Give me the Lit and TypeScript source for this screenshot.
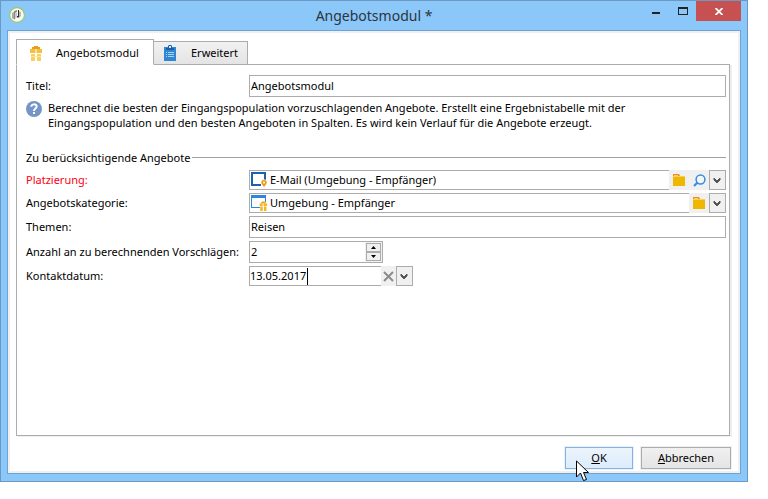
import { LitElement, html, css, svg } from "lit";
import { customElement, state } from "lit/decorators.js";

const giftShape = svg`
  <path d="M3 4V2h2V1h4v1h2v2z" fill="#ee9a20"/>
  <path d="M1 4h5v4H1zM8 4h5v4H8z" fill="#f5b818"/>
  <path d="M6 4h2v4H6z" fill="#fbe09a"/>
  <path d="M2 9h4v7H2zM8 9h4v7H8z" fill="#f5b818"/>`;

const giftIcon = html`<svg width="14" height="16" viewBox="0 0 14 16" aria-hidden="true">
  <path d="M3 4V2h2V1h4v1h2v2z" fill="#ee9a20"/>
  <path d="M1 4h5v4H1zM8 4h5v4H8z" fill="#f5c038"/>
  <path d="M6 4h2v4H6z" fill="#fbe09a"/>
  <path d="M2 9h4v7H2zM8 9h4v7H8z" fill="#f8d05c"/>
  <path d="M2 11h10v1H2z" fill="#fbe6b0"/>
</svg>`;

const clipboardIcon = html`<svg width="12" height="16" viewBox="0 0 12 16" aria-hidden="true">
  <path d="M0 2h12v14H0z" fill="#2f86d2"/>
  <path d="M2 5V3h2V1l1-1h2l1 1v2h2v2z" fill="#1d5fa5"/>
  <path d="M5 1h2v2H5z" fill="#d8e9f8"/>
  <path d="M2 7h1v1H2zM4 7h6v1H4zM2 9h1v1H2zM4 9h6v1H4zM2 11h1v1H2zM4 11h6v1H4z" fill="#a9d0f2"/>
</svg>`;

const folderIcon = html`<svg width="12" height="12" viewBox="0 0 12 12" aria-hidden="true">
  <path d="M0 0h6l1 2H0z" fill="#f0900c"/>
  <path d="M1 1h4v1H1z" fill="#f8c98a"/>
  <path d="M0 3h7V2h5v10H0z" fill="#efb700"/>
  <path d="M0 2h12v1H0z" fill="#f7d05a"/>
</svg>`;

const searchIcon = html`<svg width="13" height="13" viewBox="0 0 13 13" aria-hidden="true">
  <circle cx="7.500" cy="5.500" r="4.400" fill="#f2f7fc" stroke="#3a8bdc" stroke-width="1.500"/>
  <path d="M4.500 8.500L1 12" stroke="#3a8bdc" stroke-width="2.200"/>
</svg>`;

const chevronIcon = html`<svg width="9" height="7" viewBox="0 0 9 7" aria-hidden="true">
  <path d="M1 1v2l3 3 3-3V1L4 4z" fill="#555" stroke="#555" stroke-width="1"/>
</svg>`;

const placementIcon = html`<svg width="17" height="18" viewBox="0 0 17 18" aria-hidden="true">
  <path d="M0 1h15v8h-2V3H2v10h8v2H0z" fill="#1b62ae"/>
  <path d="M13 8.500a3 3 0 0 1 3 3c0 2-2 3-3 5-1-2-3-3-3-5a3 3 0 0 1 3-3z" fill="#f09a18" stroke="#fff" stroke-width="0.500"/>
  <circle cx="13" cy="11.500" r="1" fill="#fff"/>
</svg>`;

const categoryIcon = html`<svg width="17" height="18" viewBox="0 0 17 18" aria-hidden="true">
  <path d="M0 1h15v7h-1V4H1v9h8v1H0z" fill="#2f86d8"/>
  <g transform="translate(8 7) scale(0.620)">${giftShape}</g>
</svg>`;

const helpIcon = html`<svg class="help-icon" width="16" height="16" viewBox="0 0 16 16" aria-hidden="true">
  <circle cx="8" cy="8" r="8" fill="#7496c6"/>
  <path d="M5.300 5.800c0-3.200 5.400-3.200 5.400-.2C10.700 7.500 8 7.600 8 9.900" fill="none" stroke="#fff" stroke-width="2"/>
  <path d="M7 11h2v2H7z" fill="#fff"/>
</svg>`;

const appIcon = html`<svg class="app-icon" width="16" height="16" viewBox="0 0 16 16" aria-hidden="true">
  <circle cx="8" cy="8" r="7.400" fill="#fafbf8" stroke="#9cc653" stroke-width="1.100"/>
  <path d="M3 6l3-2v8H4l-1-1z" fill="#a9adaa"/>
  <path d="M5 4l3-1v2L6 6v6l-1 1z" fill="#8a8f8c"/>
  <path d="M6 6h2v4l-2 2z" fill="#c9ccc9"/>
  <path d="M9 3h1v7l-1 1-1-1V9h1z" fill="#2f3332"/>
  <path d="M10 4l2 1v4l-2 2z" fill="#b4b8b4"/>
</svg>`;

@customElement("app-root")
export class AppRoot extends LitElement {
  @state() private tab = 0;

  static styles = css`
    :host {
      display: block;
      padding: 0 20px 16px 0;
      background: #fff;
      color: #000;
      font: 11px/15px "Noto Sans", "Open Sans", sans-serif;
    }
    * { box-sizing: border-box; }
    svg { display: block; flex: none; }
    button, input { font: inherit; color: inherit; margin: 0; padding: 0; border-radius: 0; }
    button { display: flex; align-items: center; justify-content: center; flex: none; }

    .window {
      position: relative;
      border: 1px solid #6c99c4;
      background: #8cc7f9;
      padding: 0 6px 7px;
    }
    .titlebar {
      display: grid;
      grid-template-columns: 1fr auto 1fr;
      height: 29px;
    }
    .app-icon { margin: 6px 0 0 2px; }
    .title { margin: 0; font-size: 14px; line-height: 30px; font-weight: 400; color: #2a3540; }
    .controls { display: flex; justify-content: flex-end; }
    .control { width: 27px; height: 20px; border: 0; background: none; }
    .close { width: 45px; background: #c75050; }

    .client {
      border: 1px solid #6fa3d6;
      outline: 2px solid #f0f0f0;
      outline-offset: -3px;
      background: #fff;
      padding: 8px 10px 4px 8px;
    }
    .tabs { display: flex; align-items: flex-end; height: 26px; }
    .tab { border: 1px solid #acacac; background: linear-gradient(#f1f1f1, #e4e4e4); justify-content: flex-start; }
    .tab.plain { height: 24px; width: 94px; padding-left: 10px; gap: 15px; border-left: 0; }
    .tab.active { position: relative; height: 26px; width: 138px; padding: 2px 0 0 12px; gap: 13px; background: #fff; border-bottom-color: #fff; }
    .tab span, .action span { padding-bottom: 2px; }

    .panel {
      display: flex;
      flex-direction: column;
      gap: 3px;
      min-height: 372px;
      margin-top: -1px;
      padding: 10px 3px 10px 9px;
      border: 1px solid #acacac;
      box-shadow: 2px 1px 0 #eee;
    }
    .row { display: flex; align-items: center; }
    .label { flex: 0 0 223px; white-space: nowrap; padding-bottom: 2px; }
    .required { color: #ff0010; }
    .box {
      display: flex;
      align-items: center;
      flex: 1;
      min-width: 0;
      height: 22px;
      border: 1px solid #acacac;
      background: #fff;
      padding-left: 1px;
    }
    .short { height: 20px; }
    .open { border-right: 0; }
    .input { flex: 1; min-width: 0; width: 0; height: 18px; padding-bottom: 1px; border: 0; outline: 0; background: transparent; }
    .box svg + .input { margin-left: 2px; }
    .tool { width: 20px; height: 20px; border: 0; background: #f0f0f0; }
    .drop { width: 17px; height: 20px; border: 1px solid #acacac; background: #f0f0f0; }

    .help { display: flex; gap: 6px; margin-bottom: 17px; }
    .help-icon { margin-top: 1px; }
    .text { margin: 0; max-width: 600px; }
    .legend { display: flex; align-items: center; gap: 2px; height: 15px; margin-bottom: 2px; }
    .rule { flex: 1; height: 1px; background: #a0a0a0; }

    .number { flex: 0 0 134px; }
    .spin { display: flex; flex-direction: column; flex: none; padding: 1px; background: #f0f0f0; height: 20px; }
    .step { width: 15px; height: 9px; border: 1px solid #acacac; background: #f0f0f0; }
    .date { flex: 0 0 132px; padding-left: 0; }
    .date .input { flex: 0 0 57px; }
    .caret { width: 1px; height: 17px; background: #000; }
    .clear { width: 15px; }

    .actions { display: flex; justify-content: flex-end; gap: 8px; padding-top: 11px; margin-right: -1px; }
    .action {
      width: 90px;
      height: 22px;
      border: 1px solid #acacac;
      background: linear-gradient(#f0f0f0, #e4e4e4);
      box-shadow: 0 0 0 1px #f0f0f0;
    }
    .action.ok { width: 68px; border-color: #7eb4ea; background: linear-gradient(#ecf4fc, #dcecfc); }
    .pointer { position: absolute; left: 575px; top: 459px; }
  `;

  private drop(label: string) {
    return html`<button class="drop" aria-label=${label}>${chevronIcon}</button>`;
  }

  render() {
    return html`
      <main class="window">
        <header class="titlebar">
          ${appIcon}
          <h1 class="title">Angebotsmodul *</h1>
          <div class="controls">
            <button class="control" aria-label="Minimieren">
              <svg width="10" height="10"><path d="M1 6h8v2H1z" fill="#222"/></svg>
            </button>
            <button class="control" aria-label="Maximieren">
              <svg width="10" height="8"><path d="M0 0h10v8H0zM1 2v5h8V2z" fill="#222" fill-rule="evenodd"/></svg>
            </button>
            <button class="control close" aria-label="Schließen">
              <svg width="8" height="7"><path d="M0.500 0l7 7M7.500 0l-7 7" stroke="#fff" stroke-width="1.800"/></svg>
            </button>
          </div>
        </header>

        <div class="client">
          <div class="tabs" role="tablist">
            <button class="tab active" role="tab" aria-selected=${this.tab === 0} @click=${() => (this.tab = 0)}>
              ${giftIcon}<span>Angebotsmodul</span>
            </button>
            <button class="tab plain" role="tab" aria-selected=${this.tab === 1} @click=${() => (this.tab = 1)}>
              ${clipboardIcon}<span>Erweitert</span>
            </button>
          </div>

          <section class="panel" role="tabpanel">
            <div class="row">
              <label class="label" for="titel">Titel:</label>
              <div class="box"><input class="input" id="titel" value="Angebotsmodul"></div>
            </div>
            <div class="help">
              ${helpIcon}
              <p class="text">
                Berechnet die besten der Eingangspopulation vorzuschlagenden Angebote. Erstellt eine Ergebnistabelle mit der
                Eingangspopulation und den besten Angeboten in Spalten. Es wird kein Verlauf für die Angebote erzeugt.
              </p>
            </div>
            <div class="legend"><span>Zu berücksichtigende Angebote</span><span class="rule"></span></div>
            <div class="row">
              <label class="label required" for="platz">Platzierung:</label>
              <div class="box short open">
                ${placementIcon}<input class="input" id="platz" value="E-Mail (Umgebung - Empfänger)">
              </div>
              <button class="tool" aria-label="Ordner">${folderIcon}</button>
              <button class="tool" aria-label="Suchen">${searchIcon}</button>
              ${this.drop("Platzierung wählen")}
            </div>
            <div class="row">
              <label class="label" for="kat">Angebotskategorie:</label>
              <div class="box short open">
                ${categoryIcon}<input class="input" id="kat" value="Umgebung - Empfänger">
              </div>
              <button class="tool" aria-label="Ordner">${folderIcon}</button>
              ${this.drop("Kategorie wählen")}
            </div>
            <div class="row">
              <label class="label" for="themen">Themen:</label>
              <div class="box"><input class="input" id="themen" value="Reisen"></div>
            </div>
            <div class="row">
              <label class="label" for="anzahl">Anzahl an zu berechnenden Vorschlägen:</label>
              <div class="box number">
                <input class="input" id="anzahl" value="2" inputmode="numeric">
                <div class="spin">
                  <button class="step" aria-label="Mehr"><svg width="5" height="3"><path d="M0 3h5L2.500 0z"/></svg></button>
                  <button class="step" aria-label="Weniger"><svg width="5" height="3"><path d="M0 0h5L2.500 3z"/></svg></button>
                </div>
              </div>
            </div>
            <div class="row">
              <label class="label" for="datum">Kontaktdatum:</label>
              <div class="box short open date">
                <input class="input" id="datum" value="13.05.2017"><span class="caret"></span>
              </div>
              <button class="tool clear" aria-label="Löschen">
                <svg width="11" height="11"><path d="M1 1l9 9M10 1l-9 9" stroke="#8c8c8c" stroke-width="2"/></svg>
              </button>
              ${this.drop("Datum wählen")}
            </div>
          </section>

          <footer class="actions">
            <button class="action ok"><span><u>O</u>K</span></button>
            <button class="action"><span><u>A</u>bbrechen</span></button>
          </footer>
        </div>

        <svg class="pointer" width="13" height="22" viewBox="0 0 13 22" aria-hidden="true">
          <path d="M.5 1v16l4-4 3 7.500 3-1-3-7h5z" fill="#fff" stroke="#000"/>
        </svg>
      </main>
    `;
  }
}
